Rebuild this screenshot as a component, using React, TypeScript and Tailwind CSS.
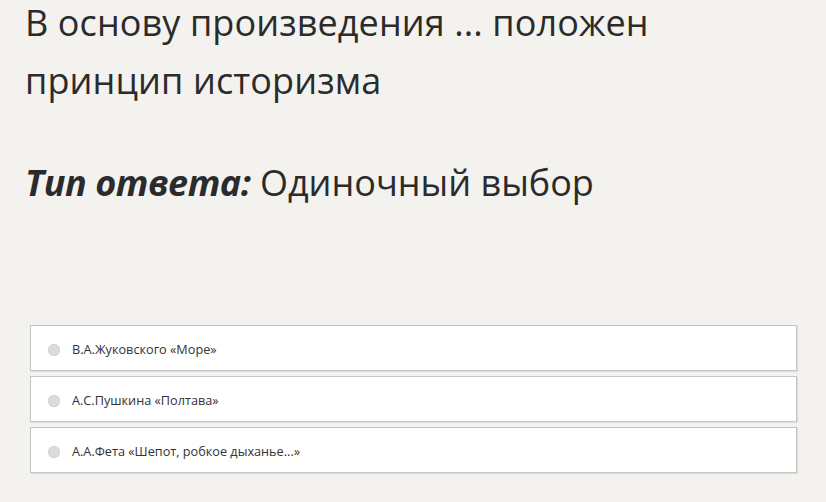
const options = [
  "В.А.Жуковского «Море»",
  "А.С.Пушкина «Полтава»",
  "А.А.Фета «Шепот, робкое дыханье...»",
];

export default function App() {
  return (
    <div
      className="min-h-[502px] w-[826px] overflow-hidden bg-[#f3f2ef] text-[#2b2b2b]"
      style={{ fontFamily: '"Open Sans", "Noto Sans", sans-serif' }}
    >
      <div className="pl-[25px] pr-4">
        <h1 className="mt-[-6px] text-[36px] font-normal leading-[58px] tracking-[0.1px]">
          В основу произведения ... положен принцип историзма
        </h1>
        <p className="mt-[44px] text-[36px] leading-[58px]">
          <span className="font-bold italic tracking-[-0.45px]">Тип ответа:</span>{" "}
          Одиночный выбор
        </p>
      </div>

      <div className="mt-[113px] ml-[30px] flex w-[767px] flex-col gap-[5px]">
        {options.map((text) => (
          <label
            key={text}
            className="flex h-[46px] items-center border border-[#c4c4c2] bg-white pl-[17px] pt-[4px] shadow-[1px_1px_1px_rgba(0,0,0,0.08)]"
          >
            <span className="h-[12px] w-[12px] rounded-full bg-[#dcdcdc] shadow-[inset_0_0_1px_rgba(0,0,0,0.25)]" />
            <span className="ml-[12px] text-[12.7px] text-[#333]">{text}</span>
          </label>
        ))}
      </div>
    </div>
  );
}
